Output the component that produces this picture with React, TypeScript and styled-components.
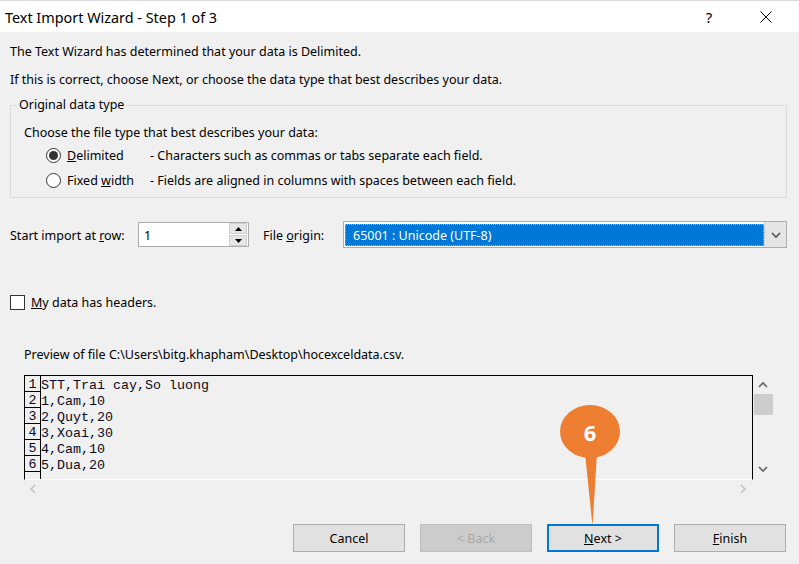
import styled, { createGlobalStyle } from 'styled-components';

const GlobalStyle = createGlobalStyle`
  html, body {
    margin: 0;
    padding: 0;
    background: #f0f0f0;
  }
  body {
    font-family: 'Noto Sans', 'Segoe UI', sans-serif;
    font-size: 12.5px;
    color: #000;
  }
`;

const Dialog = styled.div`
  position: relative;
  width: 799px;
  height: 564px;
  box-sizing: border-box;
  background: #f0f0f0;
  border-top: 1px solid #dadada;
  display: flex;
  flex-direction: column;
  overflow: hidden;
`;

const TitleBar = styled.div`
  height: 31px;
  background: #fff;
  display: flex;
  align-items: center;
  padding: 0 10px 0 5px;
`;

const Title = styled.div`
  flex: 1;
  font-size: 14.4px;
  padding-top: 1px;
`;

const TitleButton = styled.div<{ $gap?: number }>`
  width: 46px;
  height: 31px;
  margin-right: ${(p) => p.$gap ?? 0}px;
  display: flex;
  align-items: center;
  justify-content: center;
  font-size: 15px;
`;

const Body = styled.div`
  display: flex;
  flex-direction: column;
  padding: 6px 12px 0 10px;
`;

const IntroLine = styled.div`
  height: 28px;
  line-height: 28px;
  white-space: nowrap;
`;

const Group = styled.fieldset`
  margin: 3px 0 0 0;
  padding: 8px 12px 4px 13px;
  border: 1px solid #dcdcdc;
  min-width: 0;
`;

const Legend = styled.legend`
  margin-left: -7px;
  padding: 0 2px;
  line-height: 16px;
`;

const ChooseLine = styled.div`
  height: 22px;
  line-height: 24px;
`;

const RadioRow = styled.div`
  height: 25px;
  display: grid;
  grid-template-columns: 15px 89px 1fr;
  align-items: center;
  padding-left: 22px;

  & > span:nth-child(2) {
    padding-left: 6px;
  }
`;

const RadioDot = styled.span<{ $checked?: boolean }>`
  width: 15px;
  height: 15px;
  box-sizing: border-box;
  border: 1px solid #333;
  border-radius: 50%;
  background: #fff;
  display: flex;
  align-items: center;
  justify-content: center;

  &::after {
    content: '';
    width: 9px;
    height: 9px;
    border-radius: 50%;
    background: ${(p) => (p.$checked ? '#333' : 'transparent')};
  }
`;

const ImportRow = styled.div`
  margin-top: 23px;
  height: 27px;
  display: flex;
  align-items: center;
`;

const FieldLabel = styled.span<{ $width: number }>`
  width: ${(p) => p.$width}px;
  flex: none;
  white-space: nowrap;
  padding-top: 1px;
`;

const SpinBox = styled.div`
  width: 111px;
  height: 25px;
  box-sizing: border-box;
  border: 1px solid #adadad;
  background: #fff;
  display: flex;
  align-items: center;
  margin-right: 14px;
  padding: 0 1px 0 5px;
`;

const SpinValue = styled.span`
  flex: 1;
  padding-top: 1px;
`;

const SpinButtons = styled.div`
  width: 18px;
  display: flex;
  flex-direction: column;
  gap: 1px;
`;

const SpinButton = styled.div`
  height: 11px;
  background: #e5e5e5;
  border: 1px solid #cfcfcf;
  box-sizing: border-box;
  display: flex;
  align-items: center;
  justify-content: center;
`;

const Select = styled.div`
  flex: 1;
  height: 27px;
  box-sizing: border-box;
  border: 1px solid #adadad;
  background: #fff;
  display: flex;
  padding: 2px 0 1px 1px;
`;

const SelectValue = styled.div`
  flex: 1;
  background: #0078d7;
  color: #fff;
  border: 1px dotted #f0a040;
  padding: 1px 0 0 7px;
  display: flex;
  align-items: center;
`;

const SelectArrow = styled.div`
  width: 21px;
  margin: -2px 0 -1px 0;
  background: #e5e5e5;
  border-left: 1px solid #cfcfcf;
  display: flex;
  align-items: center;
  justify-content: center;
`;

const CheckRow = styled.label`
  margin-top: 44px;
  height: 20px;
  display: flex;
  align-items: center;
  gap: 6px;
`;

const CheckBox = styled.span`
  width: 15px;
  height: 15px;
  box-sizing: border-box;
  border: 1px solid #333;
  background: #fff;
`;

const PreviewLabel = styled.div`
  margin-top: 34px;
  padding-left: 14px;
  height: 16px;
  line-height: 18px;
  white-space: nowrap;
`;

const Preview = styled.div`
  margin: 13px 0 0 14px;
  display: grid;
  grid-template-columns: 729px 20px;
  grid-template-rows: 105px 18px;
`;

const PreviewBox = styled.div`
  box-sizing: border-box;
  border: 1px solid #000;
  border-bottom-color: #fff;
  overflow: hidden;
  font-family: 'Liberation Mono', 'Courier New', monospace;
  font-size: 13.33px;
  color: #0a0a1a;
`;

const DataRow = styled.div`
  height: 16px;
  display: flex;
  line-height: 20px;
`;

const LineNo = styled.span`
  width: 16px;
  height: 16px;
  flex: none;
  box-sizing: border-box;
  border-right: 1px solid #000;
  border-bottom: 1px solid #000;
  text-align: center;
  line-height: 18px;
`;

const DataText = styled.span`
  white-space: pre;
`;

const VScroll = styled.div`
  display: flex;
  flex-direction: column;
  align-items: center;
  padding-top: 6px;
`;

const Thumb = styled.div`
  width: 19px;
  height: 21px;
  margin-top: 5px;
  background: #cdcdcd;
`;

const ScrollGap = styled.div`
  flex: 1;
`;

const BottomArrow = styled.div`
  margin-bottom: 7px;
  line-height: 0;
`;

const HScroll = styled.div`
  display: flex;
  align-items: center;
  justify-content: space-between;
  padding: 0 6px 0 5px;
`;

const Buttons = styled.div`
  margin-top: 26px;
  display: flex;
  justify-content: flex-end;
  gap: 15px;
  padding-right: 1px;
`;

const Button = styled.div<{ $disabled?: boolean; $default?: boolean }>`
  width: 112px;
  height: 28px;
  box-sizing: border-box;
  display: flex;
  align-items: center;
  justify-content: center;
  padding-top: 1px;
  background: ${(p) => (p.$disabled ? '#cccccc' : '#e1e1e1')};
  color: ${(p) => (p.$disabled ? '#a8a8a8' : '#000')};
  border: ${(p) =>
    p.$default ? '2px solid #0078d7' : `1px solid ${p.$disabled ? '#bfbfbf' : '#adadad'}`};
`;

const Balloon = styled.div`
  position: absolute;
  left: 560px;
  top: 404px;
  width: 60px;
  height: 122px;
`;

const BalloonNumber = styled.span`
  position: absolute;
  left: 0;
  top: 0;
  width: 60px;
  height: 53px;
  display: flex;
  align-items: center;
  justify-content: center;
  color: #fff;
  font-family: 'Open Sans', 'Noto Sans', sans-serif;
  font-weight: 700;
  font-size: 22px;
`;

const Chevron = ({ dir, color }: { dir: 'up' | 'down' | 'left' | 'right'; color: string }) => {
  const pts = {
    up: '1,6 5,2 9,6',
    down: '1,2 5,6 9,2',
    left: '6,1 2,5 6,9',
    right: '2,1 6,5 2,9',
  }[dir];
  const vertical = dir === 'up' || dir === 'down';
  return (
    <svg width={vertical ? 10 : 8} height={vertical ? 8 : 10} viewBox={vertical ? '0 0 10 8' : '0 0 8 10'}>
      <polyline points={pts} fill="none" stroke={color} strokeWidth="1.6" />
    </svg>
  );
};

const rows = [
  'STT,Trai cay,So luong',
  '1,Cam,10',
  '2,Quyt,20',
  '3,Xoai,30',
  '4,Cam,10',
  '5,Dua,20',
  '',
];

export default function App() {
  return (
    <>
      <GlobalStyle />
      <Dialog>
        <TitleBar>
          <Title>Text Import Wizard - Step 1 of 3</Title>
          <TitleButton $gap={11}>?</TitleButton>
          <TitleButton>
            <svg width="12" height="12" viewBox="0 0 12 12">
              <path d="M0.5 0.5 L11.5 11.5 M11.5 0.5 L0.5 11.5" stroke="#000" strokeWidth="1" />
            </svg>
          </TitleButton>
        </TitleBar>

        <Body>
          <IntroLine>The Text Wizard has determined that your data is Delimited.</IntroLine>
          <IntroLine>If this is correct, choose Next, or choose the data type that best describes your data.</IntroLine>

          <Group>
            <Legend>Original data type</Legend>
            <ChooseLine>Choose the file type that best describes your data:</ChooseLine>
            <RadioRow>
              <RadioDot $checked />
              <span>
                <u>D</u>elimited
              </span>
              <span>- Characters such as commas or tabs separate each field.</span>
            </RadioRow>
            <RadioRow>
              <RadioDot />
              <span>
                Fixed <u>w</u>idth
              </span>
              <span>- Fields are aligned in columns with spaces between each field.</span>
            </RadioRow>
          </Group>

          <ImportRow>
            <FieldLabel $width={128}>
              Start import at <u>r</u>ow:
            </FieldLabel>
            <SpinBox>
              <SpinValue>1</SpinValue>
              <SpinButtons>
                <SpinButton>
                  <svg width="7" height="4" viewBox="0 0 7 4">
                    <polygon points="0,4 3.5,0 7,4" fill="#000" />
                  </svg>
                </SpinButton>
                <SpinButton>
                  <svg width="7" height="4" viewBox="0 0 7 4">
                    <polygon points="0,0 3.5,4 7,0" fill="#000" />
                  </svg>
                </SpinButton>
              </SpinButtons>
            </SpinBox>
            <FieldLabel $width={80}>
              File <u>o</u>rigin:
            </FieldLabel>
            <Select>
              <SelectValue>65001 : Unicode (UTF-8)</SelectValue>
              <SelectArrow>
                <Chevron dir="down" color="#555" />
              </SelectArrow>
            </Select>
          </ImportRow>

          <CheckRow>
            <CheckBox />
            <span>
              <u>M</u>y data has headers.
            </span>
          </CheckRow>

          <PreviewLabel>Preview of file C:\Users\bitg.khapham\Desktop\hocexceldata.csv.</PreviewLabel>

          <Preview>
            <PreviewBox>
              {rows.map((r, i) => (
                <DataRow key={i}>
                  <LineNo>{r ? i + 1 : ''}</LineNo>
                  <DataText>{r}</DataText>
                </DataRow>
              ))}
            </PreviewBox>
            <VScroll>
              <Chevron dir="up" color="#606060" />
              <Thumb />
              <ScrollGap />
              <BottomArrow>
                <Chevron dir="down" color="#606060" />
              </BottomArrow>
            </VScroll>
            <HScroll>
              <Chevron dir="left" color="#c2c2c2" />
              <Chevron dir="right" color="#c2c2c2" />
            </HScroll>
          </Preview>

          <Buttons>
            <Button>Cancel</Button>
            <Button $disabled>&lt; Back</Button>
            <Button $default>
              <span>
                <u>N</u>ext &gt;
              </span>
            </Button>
            <Button>
              <span>
                <u>F</u>inish
              </span>
            </Button>
          </Buttons>
        </Body>

        <Balloon>
          <svg width="60" height="122" viewBox="0 0 60 122">
            <polygon points="25,48 37,48 32.5,121" fill="#ed7d31" />
            <ellipse cx="30" cy="26.5" rx="30" ry="26.5" fill="#ed7d31" />
          </svg>
          <BalloonNumber>6</BalloonNumber>
        </Balloon>
      </Dialog>
    </>
  );
}
